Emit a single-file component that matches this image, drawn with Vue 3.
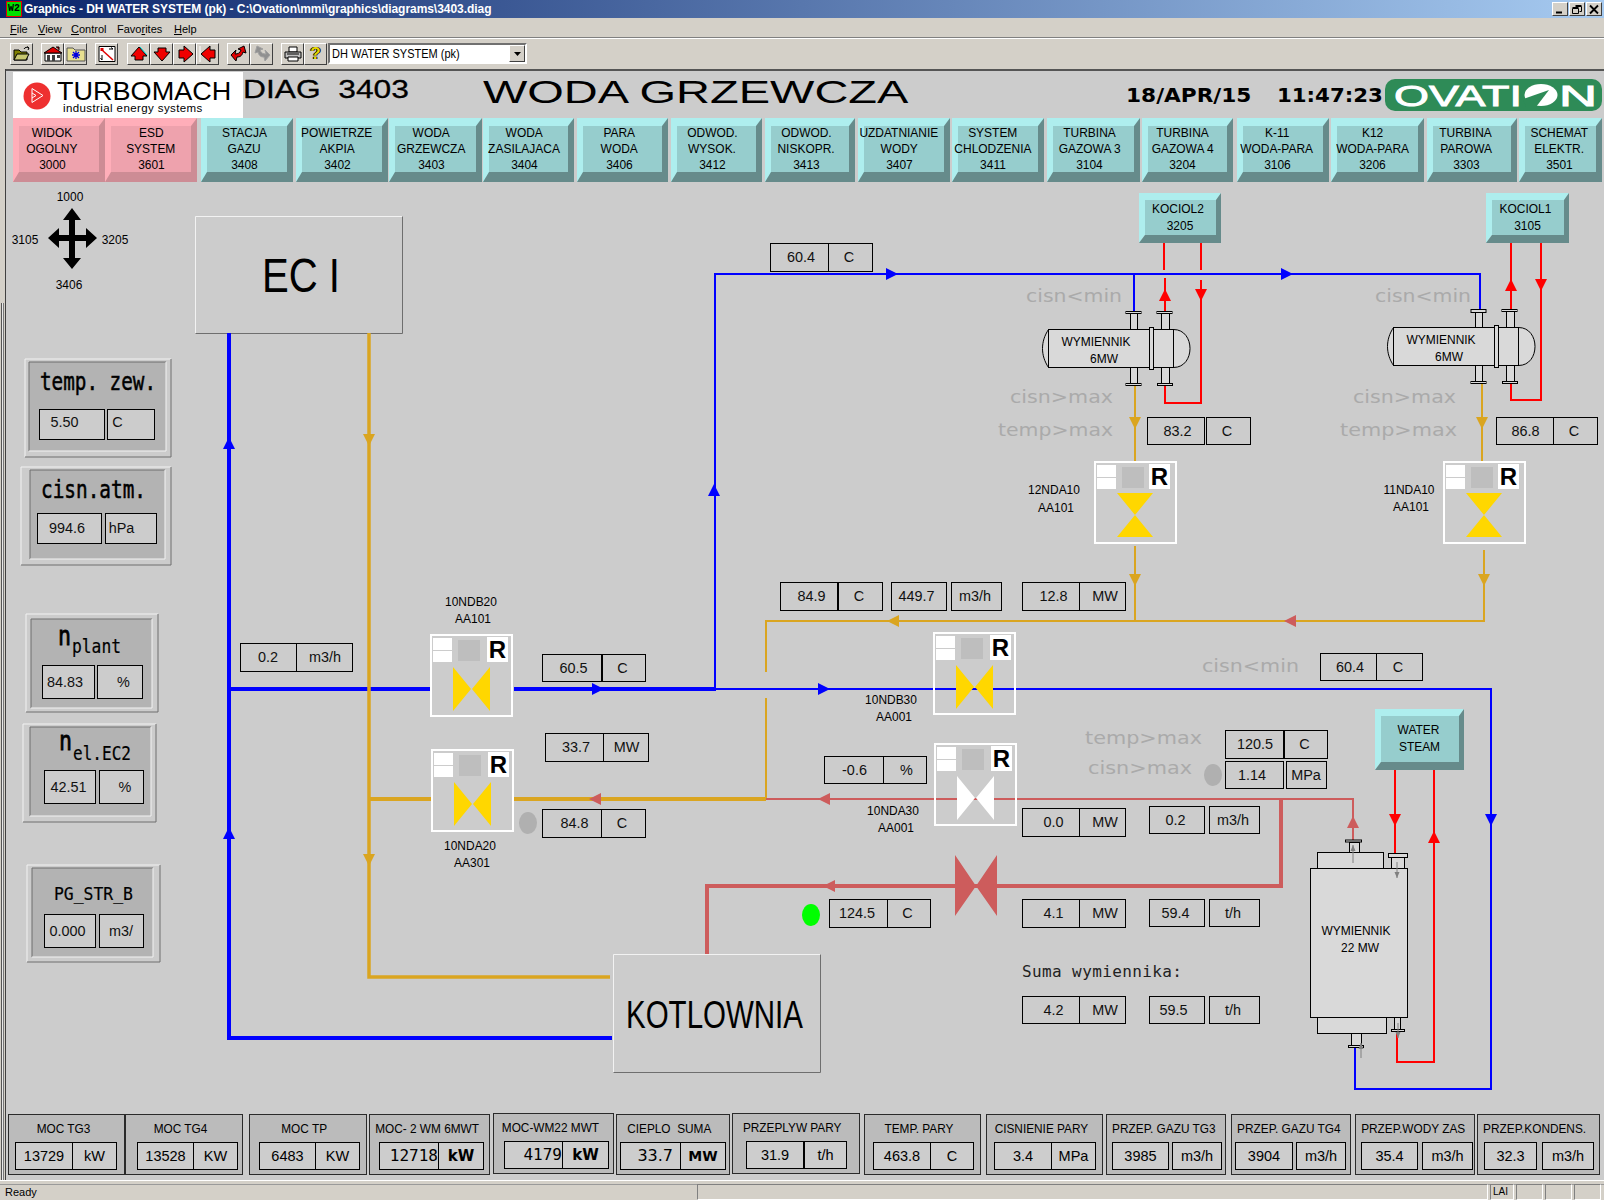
<script setup>
const navRaw = [
  [['WIDOK','OGOLNY','3000'],13,105,1,7],[['ESD','SYSTEM','3601'],105,197,1,0],
  [['STACJA','GAZU','3408'],201,293,0,3],[['POWIETRZE','AKPIA','3402'],296,388,0,5],
  [['WODA','GRZEWCZA','3403'],389,482,0,4],[['WODA','ZASILAJACA','3404'],483,574,0,4],
  [['PARA','WODA','3406'],577,668,0,3],[['ODWOD.','WYSOK.','3412'],671,762,0,4],
  [['ODWOD.','NISKOPR.','3413'],765,855,0,4],[['UZDATNIANIE','WODY','3407'],858,950,0,5],
  [['SYSTEM','CHLODZENIA','3411'],952,1044,0,5],[['TURBINA','GAZOWA 3','3104'],1047,1140,0,4],
  [['TURBINA','GAZOWA 4','3204'],1142,1233,0,5],[['K-11','WODA-PARA','3106'],1237,1329,0,6],
  [['K12','WODA-PARA','3206'],1331,1424,0,5],[['TURBINA','PAROWA','3303'],1427,1517,0,6],
  [['SCHEMAT','ELEKTR.','3501'],1519,1602,0,1]
]
const nav = navRaw.map((n, i) => ({
  lines: n[0], pink: !!n[3],
  style: { width: n[2] - n[1] + 'px', marginLeft: (n[1] - (i ? navRaw[i - 1][2] : 6)) + 'px', paddingRight: n[4] * 2 + 'px' }
}))

const bottomRaw = [
  ['MOC TG3','13729','kW',8,125,14,72,72,117,0,''],['MOC TG4','13528','KW',125,243,136,193,193,238,0,''],
  ['MOC TP','6483','KW',249,367,258,315,315,360,0,''],['MOC- 2 WM 6MWT','12718','kW',369,490,378,438,438,484,0,'big'],
  ['MOC-WM22 MWT','4179','kW',493,614,503,562,562,609,-1,'big'],['CIEPLO  SUMA','33.7','MW',616,730,619,680,680,726,0,'mid'],
  ['PRZEPLYW PARY','31.9','t/h',732,860,745,803,804,847,-1,''],['TEMP. PARY','463.8','C',864,981,872,930,930,974,0,''],
  ['CISNIENIE PARY','3.4','MPa',986,1103,993,1051,1051,1096,0,''],['PRZEP. GAZU TG3','3985','m3/h',1106,1226,1111,1168,1172,1222,0,''],
  ['PRZEP. GAZU TG4','3904','m3/h',1231,1351,1234,1292,1296,1346,0,''],['PRZEP.WODY ZAS','35.4','m3/h',1355,1475,1360,1417,1422,1473,0,''],
  ['PRZEP.KONDENS.','32.3','m3/h',1477,1600,1483,1536,1542,1594,0,'']
]
const bottom = bottomRaw.map((b, i) => ({
  title: b[0], v: b[1], u: b[2], kind: b[10],
  style: { width: b[4] - b[3] + 'px', marginLeft: (b[3] - (i ? bottomRaw[i - 1][4] : 6)) + 'px', marginTop: (2 + b[9]) + 'px' },
  rowStyle: { paddingLeft: b[5] - b[3] + 'px' },
  vStyle: { width: b[6] - b[5] + 'px' },
  uStyle: { width: b[8] - b[7] + 'px', marginLeft: (b[7] - b[6] - 1) + 'px' }
}))

const B = '#0000ff', G = '#daa520', I = '#cd5c5c', R = '#ff0000'
const pipes = [
  ['M229 333V1038H612', B, 4], ['M229 689H431', B, 4], ['M514 689H716', B, 4],
  ['M715 689H1491V1089H1355V1047', B, 2], ['M715 689V274H1480V312', B, 2], ['M1134 274V312', B, 2],
  ['M369 333V977H610', G, 3.5], ['M369 799H431', G, 4], ['M514 799H766', G, 4],
  ['M766 799V698M766 672V621H1484V550', G, 2], ['M1135 621V546', G, 2],
  ['M1135 385V461', G, 2], ['M1482 384V461', G, 2],
  ['M766 799H1353V841', I, 2], ['M1281 799V886H707V954', I, 4],
  ['M1164 243V270M1165 278V312', R, 2], ['M1201 243V270M1201 280V403H1165V386', R, 2],
  ['M1511 243V310', R, 2], ['M1541 243V400H1511V383', R, 2],
  ['M1395 770V853', R, 2], ['M1434 770V1062H1397V1029', R, 2]
]
const ar = (x, y, d, c) => {
  const l = 6, b = 6
  const p = { u: [[x, y - l], [x - b, y + l], [x + b, y + l]], d: [[x, y + l], [x - b, y - l], [x + b, y - l]],
    l: [[x - l, y], [x + l, y - b], [x + l, y + b]], r: [[x + l, y], [x - l, y - b], [x - l, y + b]] }[d]
  return { pts: p.map(q => q.join(',')).join(' '), c }
}
const arrows = [
  ar(229,443,'u',B), ar(229,833,'u',B), ar(598,689,'r',B), ar(824,689,'r',B), ar(714,490,'u',B),
  ar(892,274,'r',B), ar(1287,274,'r',B), ar(1491,820,'d',B),
  ar(369,440,'d',G), ar(369,860,'d',G), ar(595,799,'l',I), ar(893,621,'l',G), ar(1290,621,'l',I),
  ar(1135,423,'d',G), ar(1482,423,'d',G), ar(1135,580,'d',G), ar(1484,580,'d',G),
  ar(824,799,'l',I), ar(829,886,'l',I), ar(1353,822,'u',I),
  ar(1165,295,'u',R), ar(1201,295,'d',R), ar(1511,285,'u',R), ar(1541,285,'d',R),
  ar(1395,820,'d',R), ar(1434,837,'u',R)
]

const unitShift = { C: -1, MW: 3, 'm3/h': -1, 't/h': -1, '%': 2, MPa: 0 }
const pair = (v, u, a, b, c, d, y0, y1, vx = 1, ux = unitShift[u] ?? 0, vy = 0) => ({ v, u, a, b, c, d, y0, y1, vx, ux, vy })
const pairs = [
  pair('60.4','C',770,828,828,872,243,271,2), pair('83.2','C',1147,1204,1206,1250,417,444,2),
  pair('86.8','C',1496,1553,1553,1597,417,444,1), pair('84.9','C',780,837,838,882,582,610,3),
  pair('449.7','m3/h',891,946,951,1001,582,610,-2), pair('12.8','MW',1022,1079,1079,1125,582,610,3),
  pair('0.2','m3/h',240,296,296,352,643,671,0,1), pair('60.5','C',542,601,602,645,654,681,2),
  pair('60.4','C',1320,1376,1376,1422,653,680,2), pair('33.7','MW',545,603,603,648,733,761,2,1),
  pair('84.8','C',542,601,601,645,809,837,3), pair('-0.6','%',824,883,883,926,756,783,1),
  pair('120.5','C',1225,1283,1284,1327,730,758,1), pair('1.14','MPa',1225,1283,1286,1326,761,788,-2),
  pair('0.0','MW',1022,1079,1079,1125,808,836,3), pair('0.2','m3/h',1149,1204,1209,1259,806,833,-1),
  pair('4.1','MW',1022,1079,1079,1125,899,927,3), pair('59.4','t/h',1149,1204,1209,1259,899,926,-1),
  pair('124.5','C',829,887,887,930,899,927,-1), pair('4.2','MW',1022,1079,1079,1125,996,1023,3),
  pair('59.5','t/h',1149,1204,1209,1259,996,1023,-3),
  pair('5.50','C',39,104,107,154,409,439,-7,-13,-2), pair('994.6','hPa',37,101,105,156,513,543,-2,-9),
  pair('84.83','%',42,94,97,142,665,698,-3,4), pair('42.51','%',44,95,99,143,770,803,-1,4),
  pair('0.000','m3/',44,95,99,143,914,947,-2,0)
]

const hints = [
  ['cisn<min',1026,302,96],['cisn<min',1375,302,96],['cisn>max',1010,403,103],['cisn>max',1353,403,103],
  ['temp>max',998,436,115],['temp>max',1340,436,117],['cisn<min',1202,672,97],['temp>max',1085,744,117],['cisn>max',1088,774,104]
]

const valves = [
  { x: 1094, y: 461, vert: true, fill: '#ffd700', r: 0 }, { x: 1443, y: 461, vert: true, fill: '#ffd700', r: 0 },
  { x: 430, y: 634, vert: false, fill: '#ffd700', r: 2 }, { x: 431, y: 749, vert: false, fill: '#ffd700', r: 2 },
  { x: 933, y: 632, vert: false, fill: '#ffd700', r: 2 }, { x: 934, y: 743, vert: false, fill: '#ffffff', r: 2 }
]
const tieH = 'M23 33L41 55L23 77ZM60 33L42 55L60 77Z'
const tieV = 'M23 32H59L41 54ZM23 76H59L41 54Z'

const labels = [
  ['12NDA10',1054,494],['AA101',1056,512],['11NDA10',1409,494],['AA101',1411,511],
  ['10NDB20',471,606],['AA101',473,623],['10NDA20',470,850],['AA301',472,867],
  ['10NDB30',891,704],['AA001',894,721],['10NDA30',893,815],['AA001',896,832],
  ['1000',70,201],['3105',25,244],['3205',115,244],['3406',69,289]
]

const bevel = (x0, y0, x1, y1, lines, ty = 20, tx = -2) => {
  const l = 6, t = 7, r = 5, b = 8
  return { lines, x0, y0, x1, y1, cx: (x0 + x1) / 2, ty: y0 + ty, tx,
    light: `${x0},${y1} ${x0},${y0} ${x1},${y0} ${x1 - r},${y0 + t} ${x0 + l},${y0 + t} ${x0 + l},${y1 - b}`,
    dark: `${x1},${y0} ${x1},${y1} ${x0},${y1} ${x0 + l},${y1 - b} ${x1 - r},${y1 - b} ${x1 - r},${y0 + t}`,
    fx: x0 + l, fy: y0 + t, fw: x1 - x0 - l - r, fh: y1 - y0 - t - b }
}
const bevels = [
  bevel(1139,193,1221,243,['KOCIOL2','3205']), bevel(1486,193,1569,243,['KOCIOL1','3105']),
  bevel(1375,709,1464,770,['WATER','STEAM'],25,-1)
]

const frames = [
  [25,359,171,457,29,362,166,451],[21,467,171,565,30,470,165,559],[26,614,158,712,31,619,152,708],
  [23,724,156,822,30,727,151,816],[27,865,160,962,32,868,153,957]
].map(f => {
  const [a,b,c,d,e,g,h,i] = f
  return { lt: `M${a} ${d}V${b}H${c}`, rb: `M${c} ${b}V${d}H${a}`, x: e, y: g, w: h - e, h: i - g,
    ilt: `M${e} ${i}V${g}H${h}`, irb: `M${h} ${g}V${i}H${e}` }
})

const greyArrows = [[1353,863,845,-1],[1397,862,878,1],[1361,1058,1043,-1],[1398,1023,1038,1]]

const hxs = [{ dx: 0, dy: 0, topA: '#000', topB: '#000' }, { dx: 345, dy: -2, topA: 'w', topB: '#000' }]
</script>

<template>
  <div class="win">
    <div class="title">
      <span class="appicon">W2</span>
      <span class="title-text">Graphics - DH WATER SYSTEM (pk) - C:\Ovation\mmi\graphics\diagrams\3403.diag</span>
      <span class="wbtns">
        <span class="wbtn"><svg width="14" height="11" viewBox="0 0 14 11"><path d="M3 8.500h6" stroke="#000" stroke-width="2"/></svg></span>
        <span class="wbtn"><svg width="14" height="11" viewBox="0 0 14 11" fill="none" stroke="#000"><path d="M5.500 2.500h6v5h-2M5.500 1.500h6"/><path d="M2.500 4.500h6v5h-6zM2.500 3.500h6"/></svg></span>
        <span class="wbtn"><svg width="14" height="11" viewBox="0 0 14 11"><path d="M3 1.500l8 8M11 1.500l-8 8" stroke="#000" stroke-width="1.800"/></svg></span>
      </span>
    </div>
    <div class="menu">
      <span class="mi m1"><u>F</u>ile</span>
      <span class="mi m2"><u>V</u>iew</span>
      <span class="mi m3"><u>C</u>ontrol</span>
      <span class="mi m4">Favo<u>r</u>ites</span>
      <span class="mi m5"><u>H</u>elp</span>
    </div>
    <div class="toolbar">
      <span class="tb t1"><svg width="20" height="18" viewBox="0 0 20 18"><path d="M2 5h5l2 2h6v8H2z" fill="#808000" stroke="#000"/><path d="M2 15l3-6h12l-3 6z" fill="#c8c870" stroke="#000"/><path d="M12 4c1-2 3-2 5-1M17 3l-2-1.500M17 3l-1 2" stroke="#000" fill="none"/></svg></span>
      <span class="tb t2"><svg width="20" height="18" viewBox="0 0 20 18"><path d="M2 8h16v8H2z" fill="#fff" stroke="#000"/><path d="M1 8l9-6 9 6z" fill="#e00000" stroke="#000"/><path d="M4 10h3v6H4zM9 10h3v6H9zM14 10h3v3h-3z" fill="#404040"/><path d="M13 2h3v3" fill="#a00000" stroke="#000"/></svg></span>
      <span class="tb"><svg width="20" height="18" viewBox="0 0 20 18"><path d="M1 3h6l2 2h10v11H1z" fill="#e8e090" stroke="#555"/><path d="M10 6v8M6 10h8M7 7l6 6M13 7l-6 6" stroke="#0000e0" stroke-width="1.300"/></svg></span>
      <span class="tb t3"><svg width="20" height="18" viewBox="0 0 20 18"><path d="M2 1.500h16v15H2z" fill="#fff" stroke="#000"/><path d="M5 5l11 10" stroke="#e00000" stroke-width="1.500"/><rect x="3.500" y="3" width="3" height="3" fill="#e00000"/><path d="M12 4h4M16 4l-2-1.500M5 10v5M5 15l-1.500-2" stroke="#000" fill="none"/></svg></span>
      <span class="tb t4"><svg width="20" height="18" viewBox="0 0 20 18"><path d="M10 2l8 9h-4v4H6v-4H2z" fill="#f00000" stroke="#000"/><path d="M11 2l7 8" stroke="#00d0d0"/></svg></span>
      <span class="tb"><svg width="20" height="18" viewBox="0 0 20 18"><path d="M10 16l8-9h-4V3H6v4H2z" fill="#f00000" stroke="#000"/></svg></span>
      <span class="tb"><svg width="20" height="18" viewBox="0 0 20 18"><path d="M18 9l-9-8v4H4v8h5v4z" fill="#f00000" stroke="#000"/></svg></span>
      <span class="tb"><svg width="20" height="18" viewBox="0 0 20 18"><path d="M2 1v16" stroke="#fff"/><path d="M3 9l9-8v4h5v8h-5v4z" fill="#f00000" stroke="#000"/></svg></span>
      <span class="tb t3"><svg width="20" height="18" viewBox="0 0 20 18"><path d="M2 10l5 6 1-4c3 0 5-1 6-5l3 1-2-7-6 3 3 1c-1 3-3 4-6 4l1-4z" fill="#e00000" stroke="#000"/></svg></span>
      <span class="tb"><svg width="20" height="18" viewBox="0 0 20 18"><path d="M18 10l-5 6-1-4c-3 0-5-1-6-5l-3 1 2-7 6 3-3 1c1 3 3 4 6 4l-1-4z" fill="#909090" stroke="#a0a0a0"/></svg></span>
      <span class="tb t3"><svg width="20" height="18" viewBox="0 0 20 18"><path d="M6 2h8v5H6z" fill="#fff" stroke="#000"/><path d="M2 7h16v6H2z" fill="#c0c0c0" stroke="#000"/><path d="M5 12h10v4H5z" fill="#fff" stroke="#000"/><path d="M4 9h12" stroke="#000"/></svg></span>
      <span class="tb q"><span class="qm">?</span></span>
      <span class="combo"><span class="combo-text">DH WATER SYSTEM (pk)</span><span class="combo-btn"><svg width="7" height="4" viewBox="0 0 7 4"><path d="M0 0h7L3.500 4z"/></svg></span></span>
    </div>

    <div class="body">
      <div class="strip"></div>
      <div class="main">
        <div class="head">
          <div class="logo">
            <svg class="logo-mark" width="30" height="30" viewBox="0 0 30 30"><circle cx="14" cy="15" r="13.500" fill="#ee3030"/><path d="M9 7.500v14l11-7zM9 12l4 2.500-4 2.500" fill="none" stroke="#fff"/></svg>
            <div class="logo-text"><div class="logo-big">TURBOMACH</div><div class="logo-small">industrial energy systems</div></div>
          </div>
          <span class="diag">{{ 'DIAG  3403' }}</span>
          <span class="wtitle">WODA GRZEWCZA</span>
          <span class="date">18/APR/15</span>
          <span class="time">11:47:23</span>
          <svg class="ovation" width="217" height="32" viewBox="0 0 217 32">
            <rect width="217" height="32" rx="10" fill="#2e8b57"/>
            <text x="9" y="27" class="ov" textLength="128" lengthAdjust="spacingAndGlyphs">OVATI</text>
            <ellipse cx="156" cy="16" rx="16.500" ry="11" fill="#fff"/>
            <path d="M138 20L164 11L151 28L141 28Z" fill="#2e8b57"/>
            <text x="174" y="27" class="ov" textLength="38" lengthAdjust="spacingAndGlyphs">N</text>
          </svg>
        </div>

        <div class="nav">
          <div v-for="n in nav" :key="n.lines[2]" class="nbtn" :class="{ pink: n.pink }" :style="n.style">
            <span v-for="l in n.lines" :key="l">{{ l }}</span>
          </div>
        </div>

        <svg class="diagram" width="1598" height="930" viewBox="6 182 1598 930">
          <rect x="195.500" y="216.500" width="207" height="117" class="panel"/>
          <path d="M195.500 333.500V216.500H402.500" class="hl"/><path d="M402.500 216.500V333.500H195.500" class="sh"/>
          <rect x="613.500" y="954.500" width="207" height="118" class="panel"/>
          <path d="M613.500 1072.500V954.500H820.500" class="hl"/><path d="M820.500 954.500V1072.500H613.500" class="sh"/>

          <path v-for="(p, i) in pipes" :key="'p' + i" :d="p[0]" :stroke="p[1]" :stroke-width="p[2]" fill="none"/>
          <polygon v-for="(a, i) in arrows" :key="'a' + i" :points="a.pts" :fill="a.c"/>
          <path d="M955 855L976 886L955 916ZM997 855L976 886L997 916Z" :fill="I"/>

          <text x="262" y="292" class="ec" textLength="78" lengthAdjust="spacingAndGlyphs">EC I</text>
          <text x="626" y="1028" class="kot" textLength="177" lengthAdjust="spacingAndGlyphs">KOTLOWNIA</text>

          <!-- compass -->
          <path d="M69 218h6v46h-6zM56 235h34v6H56z"/>
          <path d="M72 208l9 12H63zM72 269l-9-11h18zM48 238l11-10v20zM97 238l-11-10v20z"/>

          <!-- shell and tube exchangers -->
          <g v-for="h in hxs" :key="h.dx" :transform="`translate(${h.dx} ${h.dy})`" class="hx">
            <rect x="1130.500" y="313.500" width="7" height="16"/><rect x="1161.500" y="313.500" width="8" height="16"/>
            <rect x="1130.500" y="367.500" width="7" height="16"/><rect x="1161.500" y="367.500" width="8" height="16"/>
            <path d="M1173.500 329.500c22 0 22 38 0 38z"/>
            <path d="M1048.500 329.500c-8 12-8 26 0 38z"/>
            <rect x="1048.500" y="329.500" width="101" height="38"/>
            <rect x="1149.500" y="327.500" width="4" height="42"/>
            <rect x="1153.500" y="329.500" width="20" height="38"/>
            <rect x="1126" y="311.500" width="15" :height="h.topA === 'w' ? 3 : 2" :fill="h.topA === 'w' ? '#fff' : '#000'"/>
            <rect x="1157" y="311.500" width="15" height="2" fill="#000"/>
            <rect x="1126" y="383.500" width="15" height="2" fill="#000"/>
            <rect x="1157.500" y="383.500" width="15" height="2" :fill="h.dx ? '#000' : '#fff'"/>
            <text x="1096" y="346" class="lb c">WYMIENNIK</text>
            <text x="1104" y="363" class="lb c">6MW</text>
          </g>

          <!-- 22 MW exchanger -->
          <g class="hx">
            <rect x="1349.500" y="842.500" width="10" height="10"/><rect x="1391.500" y="857.500" width="13" height="11"/>
            <rect x="1317.500" y="852.500" width="66" height="16"/>
            <rect x="1310.500" y="868.500" width="97" height="149"/>
            <rect x="1317.500" y="1017.500" width="69" height="16"/>
            <rect x="1351.500" y="1033.500" width="10" height="12"/><rect x="1394.500" y="1017.500" width="6" height="12"/>
            <rect x="1345.500" y="840" width="16" height="2" fill="#fff" stroke="#0000e0"/>
            <rect x="1388.500" y="853.500" width="19" height="4" fill="#c0c0c0"/>
            <rect x="1348.500" y="1045.500" width="15" height="2" fill="#c0c0c0"/>
            <rect x="1391.500" y="1029.500" width="13" height="2" fill="#c0c0c0"/>
          </g>
          <g v-for="(g, i) in greyArrows" :key="'g' + i">
            <path :d="`M${g[0]} ${g[1]}V${g[2]}`" stroke="#808080" fill="none"/>
            <path :d="`M${g[0]} ${g[2]}l-2.500 ${-g[3] * 6}h5z`" fill="#808080"/>
          </g>
          <text x="1356" y="935" class="lb c">WYMIENNIK</text>
          <text x="1360" y="952" class="lb c">22 MW</text>

          <!-- control valves -->
          <g v-for="(v, i) in valves" :key="'v' + i" :transform="`translate(${v.x} ${v.y})`">
            <rect x="1" y="1" width="81" height="81" class="vbox"/>
            <rect x="3" y="4" width="19" height="12" fill="#fff"/>
            <rect x="3" y="17" width="19" height="11" fill="#fff"/>
            <rect x="28" y="6" width="22" height="21" fill="#bebebe"/>
            <rect :x="55 + v.r" y="3" width="21" height="25" fill="#fff"/>
            <text :x="65.5 + v.r" y="24" class="rr">R</text>
            <path :d="v.vert ? tieV : tieH" :fill="v.fill"/>
          </g>

          <!-- gauges -->
          <g v-for="(f, i) in frames" :key="'f' + i">
            <path :d="f.lt" class="hl"/><path :d="f.rb" class="sh"/>
            <rect :x="f.x" :y="f.y" :width="f.w" :height="f.h" fill="#b3b3b3"/>
            <path :d="f.ilt" class="sh"/><path :d="f.irb" class="hl"/>
          </g>
          <text x="40" y="390" class="mono" textLength="116" lengthAdjust="spacingAndGlyphs">temp. zew.</text>
          <text x="41" y="498" class="mono" textLength="105" lengthAdjust="spacingAndGlyphs">cisn.atm.</text>
          <text x="58" y="645" class="mono nn" textLength="13" lengthAdjust="spacingAndGlyphs">n</text><text x="72" y="653" class="mono sub" textLength="49" lengthAdjust="spacingAndGlyphs">plant</text>
          <text x="59" y="750" class="mono nn" textLength="13" lengthAdjust="spacingAndGlyphs">n</text><text x="73" y="760" class="mono sub" textLength="58" lengthAdjust="spacingAndGlyphs">el.EC2</text>
          <text x="54" y="900" class="mono pg" textLength="79" lengthAdjust="spacingAndGlyphs">PG_STR_B</text>

          <!-- value and unit boxes -->
          <g v-for="(p, i) in pairs" :key="'d' + i">
            <rect :x="p.a + .5" :y="p.y0 + .5" :width="p.b - p.a" :height="p.y1 - p.y0" class="db"/>
            <rect :x="p.c + .5" :y="p.y0 + .5" :width="p.d - p.c" :height="p.y1 - p.y0" class="db"/>
            <text :x="(p.a + p.b) / 2 + p.vx" :y="(p.y0 + p.y1) / 2 + 5.5 + p.vy" class="val c">{{ p.v }}</text>
            <text :x="(p.c + p.d) / 2 + p.ux" :y="(p.y0 + p.y1) / 2 + 5.5 + p.vy" class="val c">{{ p.u }}</text>
          </g>

          <text v-for="(h, i) in hints" :key="'h' + i" :x="h[1]" :y="h[2]" :textLength="h[3]" lengthAdjust="spacingAndGlyphs" class="hint">{{ h[0] }}</text>
          <text v-for="(l, i) in labels" :key="'l' + i" :x="l[1]" :y="l[2]" class="lb c">{{ l[0] }}</text>

          <ellipse cx="528" cy="823" rx="9" ry="11" fill="#b0b0b0"/>
          <ellipse cx="1213" cy="775" rx="9" ry="11" fill="#b0b0b0"/>
          <ellipse cx="811" cy="915" rx="9" ry="11" fill="#00ff00"/>

          <text x="1022" y="977" class="suma" textLength="160">Suma wymiennika:</text>

          <g v-for="b in bevels" :key="b.lines[0]">
            <polygon :points="b.light" fill="#aeeeee"/>
            <polygon :points="b.dark" fill="#668b8b"/>
            <rect :x="b.fx" :y="b.fy" :width="b.fw" :height="b.fh" fill="#96cdcd"/>
            <text :x="b.cx + b.tx" :y="b.ty" class="lb c">{{ b.lines[0] }}</text>
            <text :x="b.cx" :y="b.ty + 17" class="lb c">{{ b.lines[1] }}</text>
          </g>
        </svg>

        <div class="bottom">
          <div v-for="b in bottom" :key="b.title" class="bp" :style="b.style">
            <div class="bp-title"><span>{{ b.title }}</span></div>
            <div class="bp-row" :style="b.rowStyle">
              <span class="bv" :class="b.kind" :style="b.vStyle">{{ b.v }}</span>
              <span class="bu" :class="b.kind" :style="b.uStyle">{{ b.u }}</span>
            </div>
          </div>
        </div>
      </div>
    </div>

    <div class="status">
      <span class="ready">Ready</span>
      <span class="pane wide"></span>
      <span class="pane lai">LAI</span>
      <span class="pane small"></span>
      <span class="pane small"></span>
      <span class="pane small"></span>
    </div>
  </div>
</template>

<style>
html, body { margin: 0; background: #d4d0c8; }
</style>

<style scoped>
.win { width: 1604px; height: 1200px; display: flex; flex-direction: column; overflow: hidden; font-family: "Liberation Sans", Arial, sans-serif; color: #000; background: #d4d0c8; }
.title { height: 18px; flex: none; display: flex; align-items: center; background: linear-gradient(90deg, #0a246a, #a6caf0); padding-left: 6px; box-sizing: border-box; }
.appicon { width: 16px; height: 16px; box-sizing: border-box; border: 1px solid #e00000; background: #00e000; color: #000; font: bold 10px/14px "Liberation Mono", monospace; text-align: center; }
.title-text { margin-left: 2px; color: #fff; font-weight: bold; font-size: 12px; letter-spacing: -.05px; white-space: nowrap; }
.wbtns { margin-left: auto; margin-right: 2px; display: flex; gap: 1px; }
.wbtn { width: 16px; height: 14px; box-sizing: border-box; background: #d4d0c8; border: 1px solid; border-color: #fff #404040 #404040 #fff; display: flex; align-items: center; justify-content: center; }
.menu { height: 20px; flex: none; display: flex; align-items: center; font-size: 11px; box-sizing: border-box; padding-top: 1px; }
.mi { white-space: nowrap; }
.m1 { margin-left: 10px; width: 28px; }
.m2 { width: 33px; }
.m3 { width: 46px; }
.m4 { width: 57px; }
.toolbar { height: 31px; flex: none; display: flex; align-items: center; padding: 0 0 1px 10px; box-sizing: border-box; border-top: 1px solid #fff; box-shadow: 0 -1px 0 #808080; }
.tb { width: 23px; height: 22px; box-sizing: border-box; background: #d4d0c8; border: 1px solid; border-color: #fff #404040 #404040 #fff; display: flex; align-items: center; justify-content: center; flex: none; }
.tb svg { display: block; }
.t1 { margin-right: 8px; }
.t2 { margin-right: 0; }
.t3 { margin-left: 8px; }
.t4 { margin-left: 9px; }
.qm { color: #e8d800; font: bold 17px/20px "Liberation Sans", sans-serif; text-shadow: 1px 0 #000, -1px 0 #000; }
.combo { margin-left: 1px; width: 199px; height: 21px; box-sizing: border-box; border: 2px solid; border-color: #707070 #fff #fff #707070; background: #fff; display: flex; align-items: center; justify-content: space-between; }
.combo-text { font-size: 12.500px; margin-left: 2px; white-space: nowrap; width: 130px; transform: scaleX(.88); transform-origin: left; }
.combo-btn { width: 16px; height: 17px; box-sizing: border-box; background: #d4d0c8; border: 1px solid; border-color: #fff #404040 #404040 #fff; display: flex; align-items: center; justify-content: center; }
.body { flex: 1; display: flex; min-height: 0; }
.strip { width: 6px; flex: none; box-sizing: border-box; border-right: 1px solid #404040; background: linear-gradient(90deg, #d4d0c8 1px, #555 1px, #555 2px, #e8e8e8 2px, #e8e8e8 3px, #777 3px, #777 4px, #d4d0c8 4px) 0 234px no-repeat; background-size: 6px 100%; }
.main { width: 1598px; display: flex; flex-direction: column; background: #ccc; border-top: 2px solid #555; box-sizing: border-box; }
.head { height: 47px; flex: none; display: flex; align-items: flex-start; padding: 1px 0 0 7px; box-sizing: border-box; white-space: pre; }
.logo { width: 230px; height: 46px; flex: none; background: #fff; display: flex; align-items: flex-start; }
.logo-mark { margin: 9px 0 0 10px; flex: none; }
.logo-text { margin-left: 4px; }
.logo-big { font-size: 26px; line-height: 22px; margin-top: 8px; width: 170px; transform: scaleX(1.04); transform-origin: left; }
.logo-small { font-size: 11.500px; line-height: 11px; letter-spacing: .4px; margin-left: 6px; margin-top: 1px; }
.diag { width: 240px; flex: none; font-size: 25px; line-height: 25px; margin-top: 5px; transform: scaleX(1.27); transform-origin: left; -webkit-text-stroke: .3px #000; }
.wtitle { width: 643px; flex: none; font-size: 30.500px; line-height: 30px; margin-top: 5px; transform: scaleX(1.54); transform-origin: left; }
.date, .time { flex: none; font-family: "DejaVu Sans", sans-serif; font-weight: bold; font-size: 19px; line-height: 20px; margin-top: 13px; transform-origin: left; }
.date { width: 151px; transform: scaleX(1.14); }
.time { width: 108px; transform: scaleX(1.12); }
.ovation { flex: none; margin-top: 7px; }
.ov { font-family: "Liberation Sans", sans-serif; font-size: 30px; fill: #fff; stroke: #fff; stroke-width: .9; }
.nav { height: 64px; flex: none; display: flex; }
.nbtn { box-sizing: border-box; height: 64px; flex: none; border-style: solid; border-width: 8px 6px 10px 6px; border-color: #aeeeee #668b8b #668b8b #aeeeee; background: #96cdcd; display: flex; flex-direction: column; align-items: center; justify-content: center; font-size: 13px; line-height: 16px; white-space: nowrap; }
.nbtn span { transform: scaleX(.92); }
.pink { border-color: #ffaeb9 #cd8c95 #cd8c95 #ffaeb9; background: #eea2ad; }
.diagram { display: block; flex: none; width: 1598px; height: 930px; font-family: "Liberation Sans", sans-serif; }
.panel { fill: #ccc; }
.hl { fill: none; stroke: #f2f2f2; }
.sh { fill: none; stroke: #6e6e6e; }
.ec { font-size: 48px; }
.kot { font-size: 38px; }
.c { text-anchor: middle; }
.lb { font-size: 13px; transform-box: fill-box; transform-origin: center; transform: scaleX(.92); }
.hx rect, .hx path { stroke: #000; fill: #d9d9d9; }
.hx text { stroke: none; }
.vbox { fill: none; stroke: #fff; stroke-width: 2; }
.rr { font-size: 24px; font-weight: bold; text-anchor: middle; }
.db { fill: #ccc; stroke: #000; }
.val { font-size: 15.500px; fill: #111; transform-box: fill-box; transform-origin: center; transform: scaleX(.93); }
.hint { font-size: 17px; fill: #aaa; font-family: "DejaVu Sans", sans-serif; }
.mono { font-family: "DejaVu Sans Mono", monospace; font-size: 24px; stroke: #000; stroke-width: .5; }
.nn { font-size: 27px; stroke-width: .8; }
.sub { font-size: 20px; stroke-width: .2; }
.pg { font-size: 18px; stroke-width: .2; }
.suma { font-family: "DejaVu Sans Mono", monospace; font-size: 16px; fill: #222; }
.bottom { height: 68px; flex: none; display: flex; align-items: flex-start; background: #ccc; }
.bp { height: 61px; box-sizing: border-box; flex: none; background: #bbb; border: 1px solid #2a2a2a; display: flex; flex-direction: column; }
.bp-title { height: 27px; font-size: 13px; line-height: 28px; text-align: center; white-space: pre; padding-right: 7px; }
.bp-title span { display: inline-block; transform: scaleX(.91); }
.bp-row { display: flex; }
.bv, .bu { height: 28px; box-sizing: border-box; border: 1px solid #000; background: #cdcdcd; font-size: 14.500px; line-height: 26px; text-align: center; flex: none; }
.bu { margin-left: -1px; }
.big.bv { font-family: "DejaVu Sans Mono", monospace; font-size: 16px; text-align: right; padding-right: 0; }
.big.bu { font-family: "DejaVu Sans", sans-serif; font-weight: bold; font-size: 15px; }
.mid.bv { font-family: "DejaVu Sans", sans-serif; font-size: 16px; text-align: right; padding-right: 7px; }
.mid.bu { font-family: "DejaVu Sans", sans-serif; font-weight: bold; font-size: 14px; }
.status { height: 20px; flex: none; display: flex; align-items: flex-end; font-size: 11px; border-top: 1px solid #fff; box-sizing: border-box; box-shadow: inset 0 3px 0 #d4d0c8, inset 0 4px 0 #9a9a9a; }
.ready { width: 692px; margin-left: 5px; line-height: 16px; flex: none; }
.pane { height: 16px; box-sizing: border-box; border: 1px solid; border-color: #808080 #fff #fff #808080; flex: none; line-height: 14px; margin-right: 2px; }
.wide { width: 791px; }
.lai { width: 24px; padding-left: 2px; font-size: 10px; }
.small { width: 27px; }
</style>
